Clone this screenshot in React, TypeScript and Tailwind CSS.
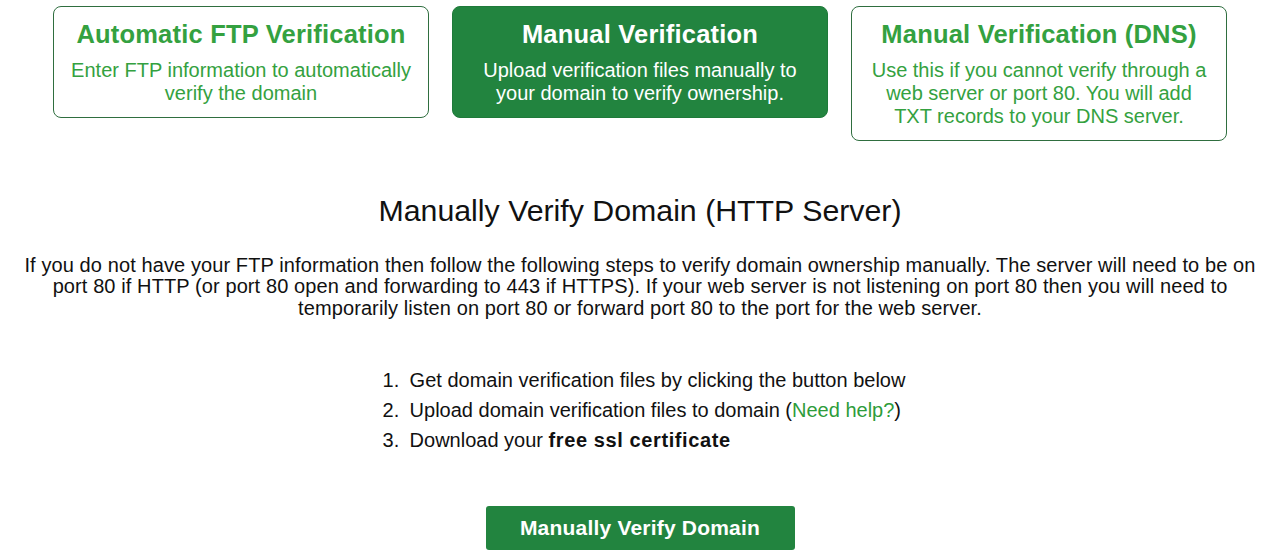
export default function App() {
  const cards = [
    {
      title: "Automatic FTP Verification",
      body: "Enter FTP information to automatically verify the domain",
      active: false,
    },
    {
      title: "Manual Verification",
      body: "Upload verification files manually to your domain to verify ownership.",
      active: true,
    },
    {
      title: "Manual Verification (DNS)",
      body: "Use this if you cannot verify through a web server or port 80. You will add TXT records to your DNS server.",
      active: false,
    },
  ];

  const steps = [
    <>Get domain verification files by clicking the button below</>,
    <>
      Upload domain verification files to domain (<a className="text-[#2e9c3a]">Need help?</a>)
    </>,
    <>
      Download your <span className="font-bold tracking-[0.6px]">free ssl certificate</span>
    </>,
  ];

  return (
    <div className="min-h-[550px] bg-white font-['Liberation_Sans',Arial,sans-serif] text-[#111]">
      <div className="flex items-start justify-center gap-[23px] pt-[6px]">
        {cards.map((c) => (
          <div
            key={c.title}
            className={
              c.active
                ? "w-[376px] rounded-[8px] border border-[#1f7a3a] bg-[#22843f] px-[17px] pt-[12px] pb-[12px] text-center text-white"
                : "w-[376px] rounded-[8px] border border-[#2f6e3f] bg-white px-[17px] pt-[12px] pb-[12px] text-center text-[#34a140]"
            }
          >
            <div className="text-[25.5px] font-bold leading-[30px] tracking-[0.2px]">{c.title}</div>
            <div className="mt-[9.5px] text-[20px] leading-[23px]">{c.body}</div>
          </div>
        ))}
      </div>

      <h1 className="mt-[52px] text-center text-[30.3px] leading-[36px]">
        Manually Verify Domain (HTTP Server)
      </h1>

      <p className="mt-[26px] px-[20px] text-center text-[20px] leading-[21.5px] tracking-[0.1px]">
        If you do not have your FTP information then follow the following steps to verify domain ownership manually. The
        server will need to be on port 80 if HTTP (or port 80 open and forwarding to 443 if HTTPS). If your web server is
        not listening on port 80 then you will need to temporarily listen on port 80 or forward port 80 to the port for
        the web server.
      </p>

      <div className="mt-[46px] flex justify-center">
        <ol className="ml-[8px] text-[20px] leading-[30px]">
          {steps.map((s, i) => (
            <li key={i} className="flex">
              <span className="w-[27px] shrink-0">{i + 1}.</span>
              <span>{s}</span>
            </li>
          ))}
        </ol>
      </div>

      <div className="mt-[51px] flex justify-center">
        <button className="h-[44px] w-[309px] rounded-[3px] bg-[#22843f] text-[21px] font-bold tracking-[0.2px] text-white">
          Manually Verify Domain
        </button>
      </div>
    </div>
  );
}
